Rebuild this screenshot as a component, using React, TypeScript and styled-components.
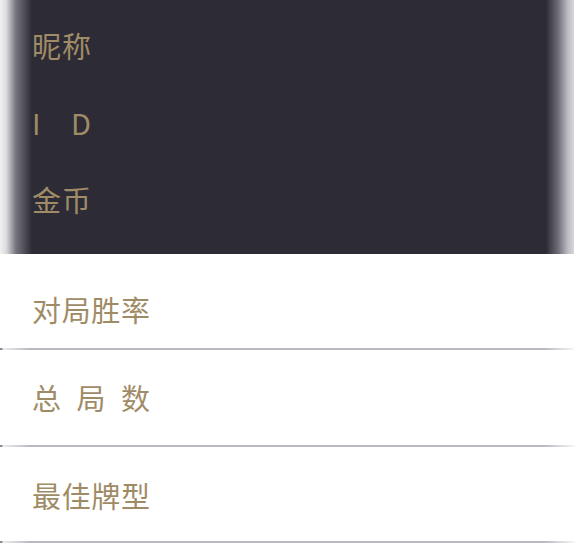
import React, { FC } from "react";
import styled, { createGlobalStyle } from "styled-components";

const GlobalStyle = createGlobalStyle`
  html, body {
    margin: 0;
    padding: 0;
    background: #ffffff;
  }
  body {
    font-family: "Noto Sans CJK SC", "Noto Sans", sans-serif;
  }
`;

const Page = styled.div`
  width: 574px;
  height: 544px;
  overflow: hidden;
  background: #ffffff;
`;

const DarkPanel = styled.div`
  height: 254px;
  box-sizing: border-box;
  padding-top: 7px;
  background: linear-gradient(
    to right,
    #f1f1f3 0,
    #dcdce0 6px,
    #75747c 16px,
    #2d2b36 32px,
    #2d2b36 calc(100% - 28px),
    #6e6d76 calc(100% - 16px),
    #bdbdc4 calc(100% - 6px),
    #d6d6dc 100%
  );
`;

const InfoRow = styled.div`
  height: 77px;
  display: flex;
  align-items: center;
  padding-left: 32px;
`;

const List = styled.div`
  display: flex;
  flex-direction: column;
`;

const StatRow = styled.div<{ $height: number; $top: number; $bottom: number }>`
  position: relative;
  height: ${(p) => p.$height}px;
  display: flex;
  align-items: center;
  padding-left: 32px;
  padding-top: ${(p) => p.$top}px;
  padding-bottom: ${(p) => p.$bottom}px;
  box-sizing: border-box;
  &::after {
    content: "";
    position: absolute;
    left: 0;
    right: 0;
    bottom: 0;
    height: 2px;
    background: linear-gradient(
      to right,
      #8d8c94 0,
      #8d8c94 2px,
      #ececef 3px,
      #bab9c1 30px,
      #bab9c1 calc(100% - 30px),
      #f4f4f6 100%
    );
  }
`;

const Label = styled.span<{ $chars: number }>`
  display: inline-block;
  width: ${(p) => p.$chars * 29.5}px;
  font-size: 29px;
  line-height: 1;
  color: #9f8c66;
  text-align: justify;
  text-align-last: justify;
  white-space: nowrap;
`;

const info = ["昵称", "I D", "金币"];
const stats = [
  { text: "对局胜率", height: 96, top: 14, bottom: 0 },
  { text: "总 局 数", height: 97, top: 0, bottom: 2 },
  { text: "最佳牌型", height: 96, top: 0, bottom: 0 },
];

const App: FC = () => {
  return (
    <Page>
      <GlobalStyle />
      <DarkPanel>
        {info.map((t) => (
          <InfoRow key={t}>
            <Label $chars={2}>{t}</Label>
          </InfoRow>
        ))}
      </DarkPanel>
      <List>
        {stats.map((s) => (
          <StatRow key={s.text} $height={s.height} $top={s.top} $bottom={s.bottom}>
            <Label $chars={4}>{s.text}</Label>
          </StatRow>
        ))}
      </List>
    </Page>
  );
};

export default App;
